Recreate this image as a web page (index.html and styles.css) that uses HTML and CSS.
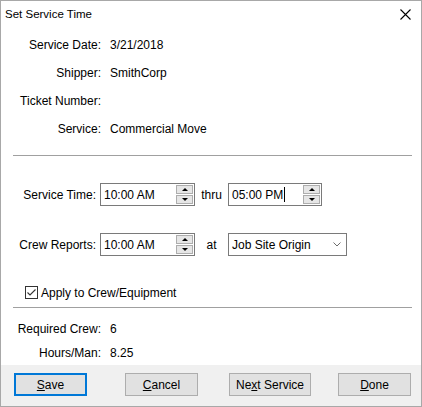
FILE: index.html
```html
<!DOCTYPE html>
<html>
<head>
<meta charset="utf-8">
<link rel="stylesheet" href="styles.css">
</head>
<body>
<div class="window">
  <div class="titlebar">
    <span class="title">Set Service Time</span>
    <svg class="close" width="11" height="11" viewBox="0 0 11 11"><path d="M0.5 0.5 L10.5 10.5 M10.5 0.5 L0.5 10.5" stroke="#000" stroke-width="1.1" fill="none"/></svg>
  </div>

  <div class="info">
    <span class="lbl">Service Date:</span><span>3/21/2018</span>
    <span class="lbl">Shipper:</span><span>SmithCorp</span>
    <span class="lbl">Ticket Number:</span><span></span>
    <span class="lbl">Service:</span><span>Commercial Move</span>
  </div>

  <div class="sep sep1"></div>

  <div class="form">
    <span class="lbl">Service Time:</span>
    <div class="field spin">
      <span class="val">10:00 AM</span>
      <div class="btns"><span class="sb up"></span><span class="sb dn"></span></div>
    </div>
    <span class="mid">thru</span>
    <div class="field spin w2">
      <span class="val">05:00 PM<span class="caret"></span></span>
      <div class="btns"><span class="sb up"></span><span class="sb dn"></span></div>
    </div>

    <span class="lbl">Crew Reports:</span>
    <div class="field spin">
      <span class="val">10:00 AM</span>
      <div class="btns"><span class="sb up"></span><span class="sb dn"></span></div>
    </div>
    <span class="mid">at</span>
    <div class="field combo">
      <span class="val">Job Site Origin</span>
      <svg class="chev" width="8" height="5" viewBox="0 0 8 5"><path d="M0.5 0.5 L4 4 L7.5 0.5" stroke="#6d6d6d" stroke-width="1" fill="none"/></svg>
    </div>
  </div>

  <div class="check">
    <svg class="box" width="13" height="13" viewBox="0 0 13 13"><rect x="0.5" y="0.5" width="12" height="12" fill="#fff" stroke="#333"/><path d="M2.5 6.5 L5 9 L10.5 3.5" stroke="#333" stroke-width="1.1" fill="none"/></svg>
    <span>Apply to Crew/Equipment</span>
  </div>

  <div class="sep sep2"></div>

  <div class="info stats">
    <span class="lbl">Required Crew:</span><span>6</span>
    <span class="lbl">Hours/Man:</span><span>8.25</span>
  </div>

  <div class="buttons">
    <div class="btn save"><u>S</u>ave</div>
    <div class="btn cancel"><u>C</u>ancel</div>
    <div class="btn next">Ne<u>x</u>t Service</div>
    <div class="btn done"><u>D</u>one</div>
  </div>
</div>
</body>
</html>
```
FILE: styles.css
```css
html, body {
  margin: 0;
  padding: 0;
  background: #fff;
}

body {
  font-family: "Liberation Sans", Arial, sans-serif;
  font-size: 12px;
  color: #000;
}

.window {
  width: 422px;
  height: 407px;
  box-sizing: border-box;
  border: 1px solid #a8a8a8;
  display: flex;
  flex-direction: column;
  background: #fff;
}

.titlebar {
  height: 30px;
  display: flex;
  align-items: flex-start;
  justify-content: space-between;
  flex: none;
}

.title {
  font-size: 11.5px;
  line-height: 26px;
  padding-left: 4px;
}

.close {
  margin-top: 8px;
  margin-right: 10px;
}

.info {
  display: grid;
  grid-template-columns: 100px auto;
  column-gap: 9px;
  grid-auto-rows: 28px;
  align-items: center;
  flex: none;
}

.lbl {
  text-align: right;
  white-space: nowrap;
}

.sep {
  height: 0;
  border-top: 1px solid #a0a0a0;
  margin: 0 9px 0 12px;
  flex: none;
}

.sep1 { margin-top: 12px; }

.form {
  margin-top: 27px;
  display: grid;
  grid-template-columns: 99px 95px 33px auto;
  grid-auto-rows: 23px;
  row-gap: 27px;
  align-items: center;
  flex: none;
}

.form .lbl {
  padding-right: 4px;
}

.mid {
  text-align: center;
}

.field {
  height: 23px;
  box-sizing: border-box;
  border: 1px solid #7a7a7a;
  display: flex;
  align-items: center;
  background: #fff;
}

.spin { width: 95px; }
.spin.w2 { width: 94px; }

.val {
  flex: 1;
  padding-left: 3px;
  white-space: nowrap;
  display: flex;
  align-items: center;
}

.caret {
  display: inline-block;
  width: 1px;
  height: 15px;
  background: #000;
  margin-left: 1px;
}

.btns {
  align-self: flex-start;
  margin: 1px 1px 0 0;
  display: flex;
  flex-direction: column;
  gap: 1px;
}

.sb {
  width: 17px;
  height: 9px;
  box-sizing: border-box;
  border: 1px solid #adadad;
  background: #e6e6e6;
  display: flex;
  align-items: center;
  justify-content: center;
}

.sb::after {
  content: "";
  width: 0;
  height: 0;
  border-left: 3px solid transparent;
  border-right: 3px solid transparent;
}

.up::after { border-bottom: 3px solid #000; }
.dn::after { border-top: 3px solid #000; }

.combo { width: 119px; }

.chev {
  margin-right: 5px;
}

.check {
  margin-top: 30px;
  padding-left: 24px;
  display: flex;
  align-items: center;
  gap: 3px;
  height: 13px;
  flex: none;
}

.box { flex: none; }

.sep2 { margin-top: 8px; }

.stats {
  margin-top: 9px;
  grid-auto-rows: 24px;
}

.buttons {
  flex: 1;
  background: #f0f0f0;
  display: flex;
  align-items: flex-start;
  padding: 8px 0 0 13px;
}

.btn {
  height: 23px;
  width: 73px;
  box-sizing: border-box;
  border: 1px solid #adadad;
  background: #e1e1e1;
  display: flex;
  align-items: center;
  justify-content: center;
  white-space: nowrap;
}

.btn.save { border: 2px solid #0078d7; }
.btn.cancel { margin-left: 38px; }
.btn.next { margin-left: 31px; width: 82px; }
.btn.done { margin-left: 27px; }
```
